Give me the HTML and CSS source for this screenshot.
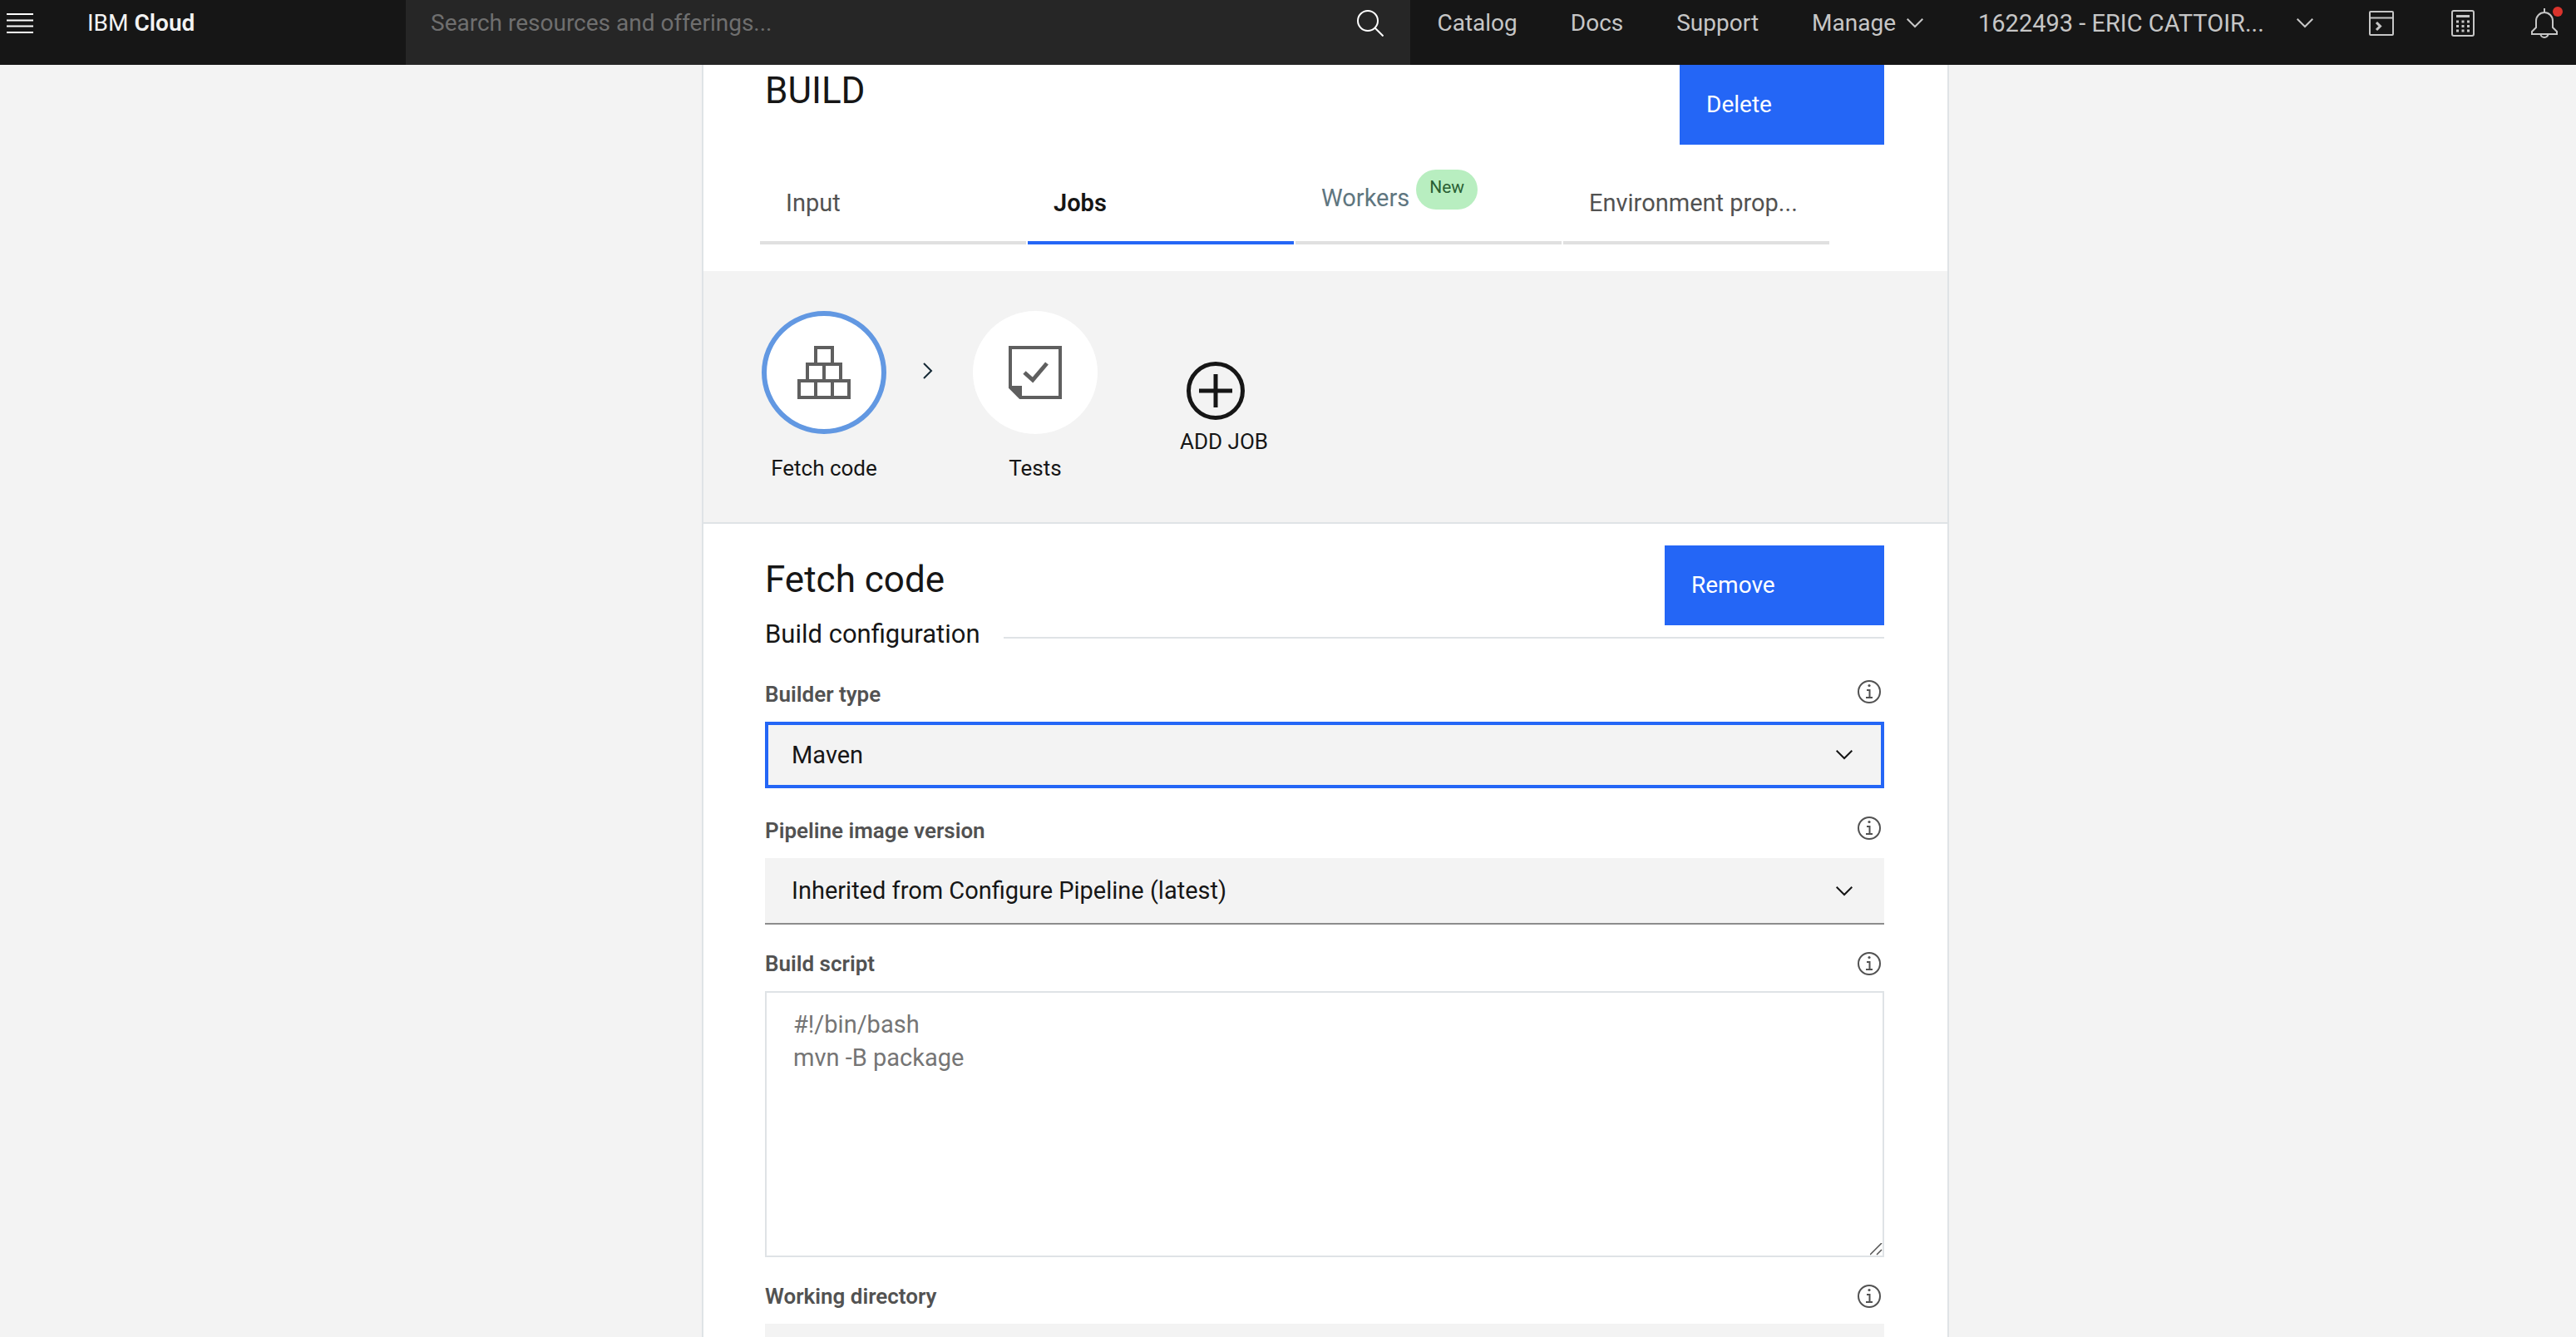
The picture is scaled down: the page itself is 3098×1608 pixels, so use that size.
FILE: index.html
```html
<!DOCTYPE html>
<html lang="en">
<head>
<meta charset="utf-8">
<meta name="viewport" content="width=device-width, initial-scale=1">
<title>BUILD - IBM Cloud</title>
<link rel="stylesheet" href="styles.css">
</head>
<body>
<svg class="sprite" aria-hidden="true">
  <symbol id="chevron" viewBox="0 0 20 12"><path d="M.7.7 10 10l9.300-9.300" fill="none" stroke="currentColor" stroke-width="2"/></symbol>
  <symbol id="info" viewBox="0 0 28 28">
    <circle cx="14" cy="14" r="13" fill="none" stroke="currentColor" stroke-width="2"/>
    <circle cx="14" cy="6.500" r="1.600" fill="currentColor"/>
    <path d="M11 12h3.500v9M10 21h8" fill="none" stroke="currentColor" stroke-width="2"/>
  </symbol>
</svg>

<header class="topbar">
  <button class="menu" type="button" aria-label="Menu">
    <svg width="32" height="24" viewBox="0 0 32 24"><path d="M0 1h32M0 8.500h32M0 15.500h32M0 23h32" stroke="currentColor" stroke-width="2"/></svg>
  </button>
  <a class="brand" href="#">IBM <b>Cloud</b></a>
  <form class="search" role="search">
    <input type="search" aria-label="Search" placeholder="Search resources and offerings...">
    <button type="button" aria-label="Search">
      <svg width="32" height="32" viewBox="0 0 32 32" fill="none" stroke="currentColor" stroke-width="2"><circle cx="13" cy="13" r="12"/><path d="m21.500 21.500 10 10"/></svg>
    </button>
  </form>
  <nav class="nav">
    <div class="links">
      <a href="#">Catalog</a>
      <a href="#">Docs</a>
      <a href="#">Support</a>
      <button type="button">Manage <svg width="20" height="12"><use href="#chevron"/></svg></button>
    </div>
    <button class="account" type="button">1622493 - ERIC CATTOIR... <svg width="20" height="12"><use href="#chevron"/></svg></button>
    <button type="button" aria-label="Shell">
      <svg width="32" height="32" viewBox="0 0 32 32" fill="none" stroke="currentColor" stroke-width="2"><rect x="2" y="2" width="28" height="28" rx="1"/><path d="M2 9.500h28"/><path d="m10 15 4.500 4.500L10 24" stroke-width="3"/></svg>
    </button>
    <button type="button" aria-label="Cost estimator">
      <svg width="32" height="32" viewBox="0 0 32 32" fill="none" stroke="currentColor" stroke-width="2"><rect x="3" y="1" width="26" height="30" rx="2"/><path d="M8 7.500h16" stroke-width="3"/><path d="M8 14h16M8 19.500h16M8 25h16" stroke-width="3" stroke-dasharray="3 3.500"/></svg>
    </button>
    <button class="bell" type="button" aria-label="Notifications">
      <svg width="32" height="36" viewBox="0 0 32 36" fill="none" stroke="currentColor" stroke-width="2"><path d="M16 0v5M6 15a10 10 0 0 1 20 0v8l5 5v3H1v-3l5-5zM11.500 31a4.500 4 0 0 0 9 0"/></svg>
      <span class="dot"></span>
    </button>
  </nav>
</header>

<main class="page">
  <div class="panel">
    <section class="stage">
      <div class="stage-head">
        <h1>BUILD</h1>
        <button class="primary" type="button">Delete</button>
      </div>
      <div class="tabs" role="tablist">
        <button role="tab" type="button">Input</button>
        <button role="tab" type="button" aria-selected="true">Jobs</button>
        <button role="tab" type="button" class="workers">Workers <span class="badge">New</span></button>
        <button role="tab" type="button">Environment prop...</button>
      </div>
    </section>

    <section class="jobs">
      <button class="job selected" type="button">
        <span class="disc"><svg width="64" height="64" viewBox="0 0 64 64" fill="none" stroke="currentColor" stroke-width="4"><path d="M22 22V2h20v20M12 42V22h40v20M32 22v20M2 42h60v20H2zM22 42v20M42 42v20"/></svg></span>
        Fetch code
      </button>
      <svg class="arrow" width="12" height="20" viewBox="0 0 12 20"><path d="m1 1 9 9-9 9" fill="none" stroke="currentColor" stroke-width="2"/></svg>
      <button class="job" type="button">
        <span class="disc"><svg width="64" height="64" viewBox="0 0 64 64" fill="none" stroke="currentColor" stroke-width="4"><path d="M14 62h48V2H2v48z"/><path d="M1 48h15v15z" fill="currentColor" stroke="none"/><path d="m19 32 10 9 17-20" stroke-width="5"/></svg></span>
        Tests
      </button>
      <button class="add" type="button">
        <svg width="70" height="70" viewBox="0 0 70 70" fill="none" stroke="currentColor"><circle cx="35" cy="35" r="32.500" stroke-width="5"/><path d="M15 35h40M35 15v40" stroke-width="5"/></svg>
        ADD JOB
      </button>
    </section>

    <section class="config">
      <div class="config-head">
        <h2>Fetch code</h2>
        <button class="primary wide" type="button">Remove</button>
      </div>
      <h3>Build configuration</h3>

      <div class="field pick">
        <div class="field-head"><label for="builder">Builder type</label><button class="info" type="button" aria-label="About builder type"><svg width="28" height="28"><use href="#info"/></svg></button></div>
        <div class="select focused"><select id="builder"><option>Maven</option></select><svg width="20" height="12"><use href="#chevron"/></svg></div>
      </div>
      <div class="field pick">
        <div class="field-head"><label for="image">Pipeline image version</label><button class="info" type="button" aria-label="About pipeline image version"><svg width="28" height="28"><use href="#info"/></svg></button></div>
        <div class="select"><select id="image"><option>Inherited from Configure Pipeline (latest)</option></select><svg width="20" height="12"><use href="#chevron"/></svg></div>
      </div>
      <div class="field">
        <div class="field-head"><label for="script">Build script</label><button class="info" type="button" aria-label="About build script"><svg width="28" height="28"><use href="#info"/></svg></button></div>
        <textarea id="script" rows="7">#!/bin/bash
mvn -B package</textarea>
      </div>
      <div class="field">
        <div class="field-head"><label for="dir">Working directory</label><button class="info" type="button" aria-label="About working directory"><svg width="28" height="28"><use href="#info"/></svg></button></div>
        <input id="dir" type="text">
      </div>
    </section>
  </div>
</main>
</body>
</html>
```
FILE: styles.css
```css
* { box-sizing: border-box; }

body {
  margin: 0;
  height: 100vh;
  display: flex;
  flex-direction: column;
  overflow: hidden;
  background: #f3f3f3;
  color: #161616;
  font: 400 29px/40px Roboto, "Liberation Sans", sans-serif;
}

button, input, select, textarea {
  font: inherit;
  color: inherit;
  margin: 0;
  padding: 0;
  border: 0;
  border-radius: 0;
  background: none;
  outline: 0;
  text-align: left;
}

a { color: inherit; text-decoration: none; }
svg { display: block; flex: none; }
.sprite { position: absolute; width: 0; height: 0; }

/* Top bar */
.topbar {
  flex: none;
  display: flex;
  height: 78px;
  background: #161616;
  color: #fff;
  font-size: 28px;
}
.topbar > *, .search > * { padding-bottom: 22px; }
.topbar > .search { padding-bottom: 0; }
.menu { width: 105px; padding-left: 8px; display: flex; align-items: center; }
.brand { width: 383px; display: flex; align-items: center; white-space: pre; color: #f3f3f3; }
.brand b { font-weight: 600; }
.search { flex: 1; display: flex; background: #262626; }
.search input { flex: 1; min-width: 0; padding-left: 30px; appearance: none; }
.search input::placeholder { color: #6f6f6f; opacity: 1; }
.search button { display: flex; align-items: center; padding-right: 32px; }
.nav {
  display: flex;
  align-items: center;
  gap: 66px;
  padding-left: 32px;
  padding-right: 22px;
  color: #c6c6c6;
  white-space: nowrap;
}
.links { display: flex; align-items: center; gap: 64px; }
.nav button { display: flex; align-items: center; gap: 13px; }
.nav .account { width: 403px; justify-content: space-between; font-size: 29px; }
.bell { position: relative; }
.dot {
  position: absolute;
  top: -2px;
  right: -6px;
  width: 12px;
  height: 12px;
  border-radius: 50%;
  background: #da332c;
}

/* Page */
.page {
  flex: 1;
  min-height: 0;
  overflow-y: auto;
  scrollbar-width: none;
  padding-left: 90px;
}
.panel {
  max-width: 1500px;
  margin: 0 auto;
  background: #fff;
  border: solid #dfe3e6;
  border-width: 0 2px;
}

h1, h2, h3 { margin: 0; font-weight: 400; }
h1, h2 { font-size: 44px; line-height: 56px; }

.primary {
  width: 246px;
  height: 96px;
  padding-left: 32px;
  background: #2466f6;
  color: #fff;
  font-size: 28px;
}
.wide { width: 264px; }

.stage { padding-bottom: 32px; }
.stage-head {
  display: flex;
  justify-content: space-between;
  padding: 0 76px 0 74px;
}
.stage-head h1 { padding-top: 3px; }

.tabs {
  display: grid;
  grid-template-columns: repeat(4, 1fr);
  gap: 2px;
  margin-top: 24px;
  padding: 0 142px 0 68px;
}
.tabs button {
  height: 96px;
  padding: 0 31px;
  border-bottom: 4px solid #e0e0e0;
  color: #525252;
  white-space: nowrap;
}
.tabs [aria-selected] { border-color: #2466f6; color: #161616; font-weight: 600; }
.tabs .workers {
  display: flex;
  align-items: center;
  gap: 8px;
  padding-bottom: 12px;
  color: #5f7680;
}
.badge {
  height: 48px;
  margin-bottom: 20px;
  padding: 0 16px;
  border-radius: 24px;
  background: #b8eec0;
  color: #2a5f34;
  font-size: 21px;
  line-height: 42px;
}

/* Jobs */
.jobs {
  display: flex;
  align-items: flex-start;
  padding: 48px 70px;
  background: #f3f3f3;
  border-bottom: 2px solid #dfe3e6;
  font-size: 26px;
}
.job {
  width: 150px;
  display: flex;
  flex-direction: column;
  align-items: center;
  gap: 24px;
  line-height: 34px;
}
.disc {
  width: 150px;
  height: 148px;
  display: grid;
  place-items: center;
  border-radius: 50%;
  background: #fff;
  color: #5f5f5f;
}
.selected .disc { border: 6px solid #6298e2; }
.arrow { margin: 62px 48px 0 44px; color: #152935; }
.add { margin: 61px 0 0 99px; line-height: 34px; }
.add svg { margin: 0 0 9px 8px; }

/* Configuration */
.config { padding: 26px 76px 0 74px; }
.config-head { display: flex; justify-content: space-between; }
.config-head h2 { padding-top: 13px; }
h3 {
  display: flex;
  align-items: center;
  gap: 28px;
  margin: -9px 0 35px;
  font-size: 31px;
}
h3::after {
  content: "";
  flex: 1;
  height: 2px;
  margin-top: 8px;
  background: #dfe3e6;
}

.field { margin-bottom: 30px; }
.field-head {
  display: flex;
  align-items: center;
  justify-content: space-between;
  height: 34px;
  margin-bottom: 16px;
  color: #525252;
}
.field label { font-size: 26px; font-weight: 600; }
.info { margin-right: 4px; }
.pick .info { margin-bottom: 6px; }
.pick:has(+ .pick) { margin-bottom: 34px; }

.select { position: relative; }
.select select, .field input {
  display: block;
  width: 100%;
  height: 80px;
  padding: 0 32px;
  appearance: none;
  background: #f3f3f3;
  border-bottom: 2px solid #8c8c8c;
}
.select svg {
  position: absolute;
  top: 34px;
  right: 38px;
  pointer-events: none;
}
.select.focused select { padding: 0 28px; border: 4px solid #2466f6; }

textarea {
  display: block;
  width: 100%;
  height: 320px;
  padding: 18px 32px;
  border: 2px solid #dfe3e6;
  color: #757575;
  resize: both;
}
textarea::-webkit-resizer {
  background: url("data:image/svg+xml,%3Csvg xmlns='http://www.w3.org/2000/svg' viewBox='0 0 15 15'%3E%3Cpath d='M0 14 14 0M8 14l6-6' fill='none' stroke='%23525252' stroke-width='1.500'/%3E%3C/svg%3E") center / 15px 15px no-repeat;
}
```
